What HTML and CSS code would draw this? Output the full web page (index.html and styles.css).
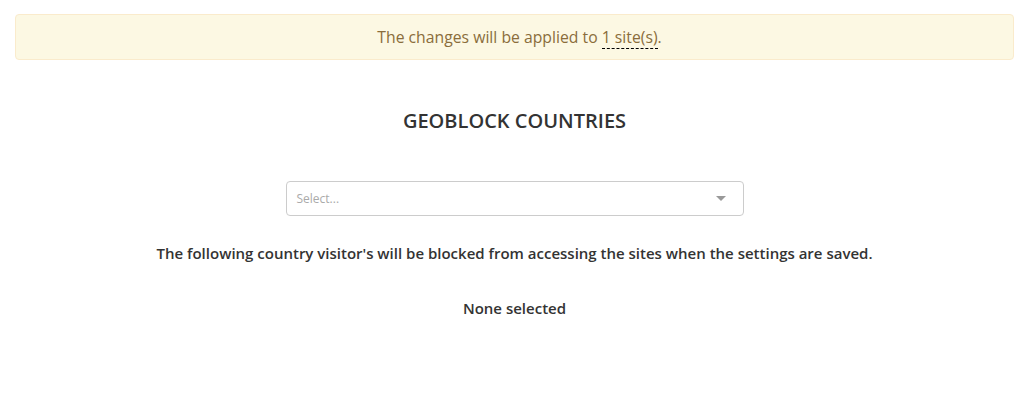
FILE: index.html
```html
<!DOCTYPE html>
<html>
<head>
<meta charset="utf-8">
<link rel="stylesheet" href="styles.css">
</head>
<body>
<div class="page">
  <div class="notice">The changes will be applied to <span class="sites">1 site(s)</span>.</div>
  <h2 class="title">GEOBLOCK COUNTRIES</h2>
  <div class="select-wrap">
    <div class="select">
      <span class="placeholder">Select...</span>
      <span class="arrow"></span>
    </div>
  </div>
  <p class="info">The following country visitor's will be blocked from accessing the sites when the settings are saved.</p>
  <p class="none">None selected</p>
</div>
</body>
</html>
```
FILE: styles.css
```css
html, body {
  margin: 0;
  padding: 0;
  background: #fff;
}
body {
  font-family: "Open Sans", "Noto Sans", sans-serif;
  color: #333;
}
.page {
  padding: 14px 20px 0 15px;
}
.notice {
  background: #fcf8e3;
  border: 1px solid #faebcc;
  border-radius: 4px;
  color: #8a6d3b;
  font-size: 15.75px;
  line-height: 22px;
  padding: 11px 15px 11px 25px;
  text-align: center;
}
.sites {
  border-bottom: 1px dashed #000;
}
.title {
  margin: 47px 0 0;
  text-align: center;
  font-size: 20px;
  font-weight: 600;
  line-height: 28px;
  color: #333;
}
.select-wrap {
  display: flex;
  justify-content: center;
  margin-top: 46px;
}
.select {
  width: 446px;
  height: 33px;
  border: 1px solid #ccc;
  border-radius: 4px;
  display: flex;
  align-items: center;
  justify-content: space-between;
  padding: 0 0 0 10px;
  box-sizing: content-box;
}
.placeholder {
  color: #aaa;
  font-size: 12px;
}
.arrow {
  width: 0;
  height: 0;
  border-left: 5px solid transparent;
  border-right: 5px solid transparent;
  border-top: 5px solid #999;
  margin-right: 17px;
}
.info {
  margin: 27px 0 0;
  text-align: center;
  font-size: 15px;
  font-weight: 600;
  line-height: 21px;
}
.none {
  margin: 34px 0 0;
  text-align: center;
  font-size: 15px;
  font-weight: 600;
  line-height: 21px;
}
```
